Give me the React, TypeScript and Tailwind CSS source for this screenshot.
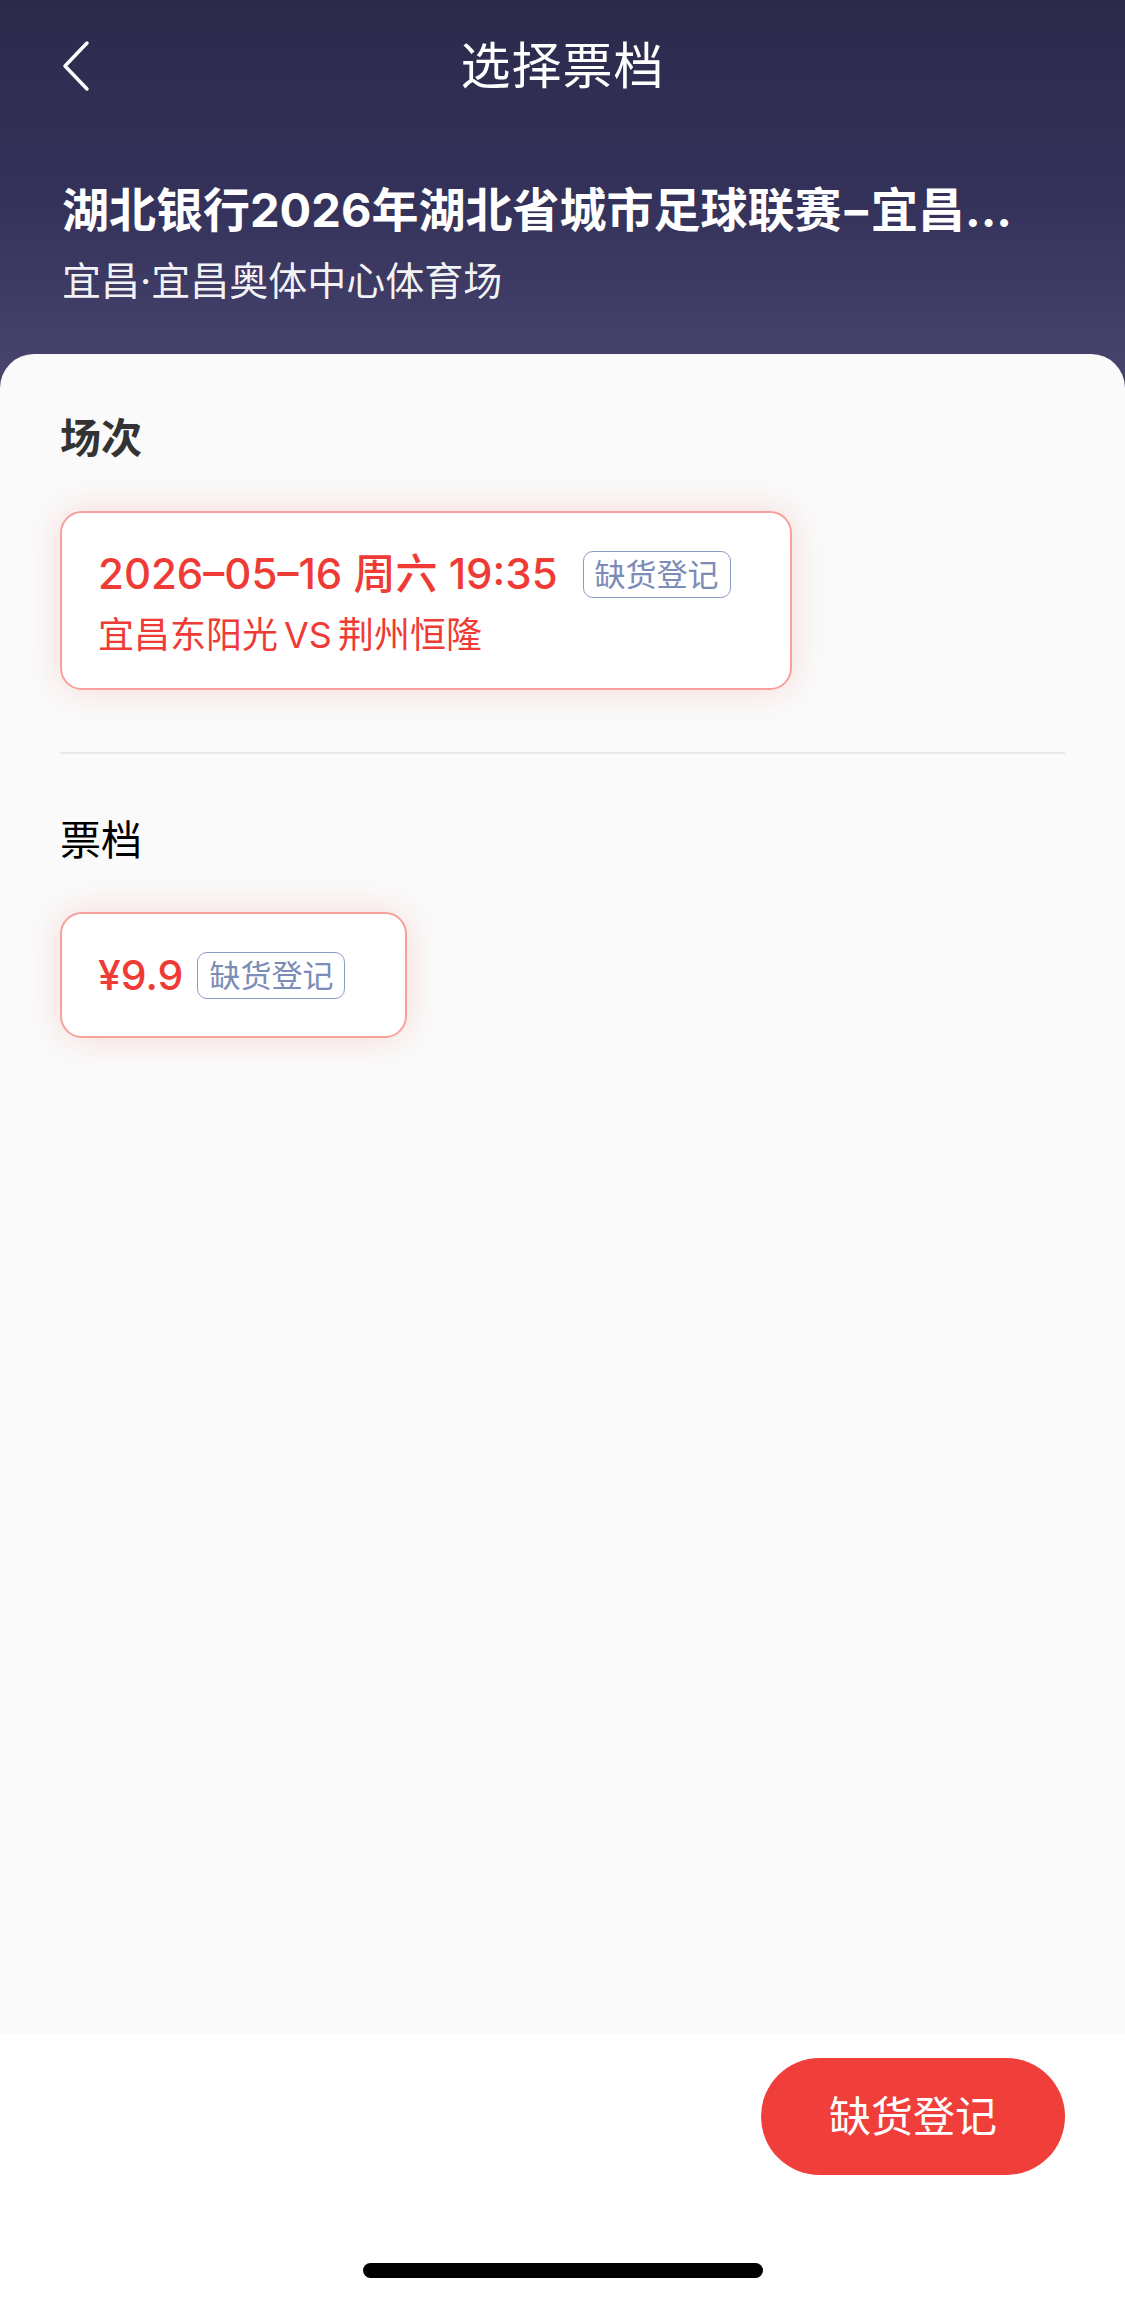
import React from "react";

const FONT = "font-['Inter','Noto_Sans_CJK_SC',sans-serif]";

function Badge() {
  return (
    <span className="inline-flex h-[47px] w-[148px] items-center justify-center rounded-[10px] border-[1.5px] border-[#8b9bc2] text-[31px] leading-none text-[#7b8cb6]">
      缺货登记
    </span>
  );
}

export default function App() {
  return (
    <div className={`${FONT} flex min-h-[2304px] w-[1125px] flex-col bg-[#fafafa]`}>
      {/* Header */}
      <div className="h-[400px] bg-gradient-to-b from-[#2c2a4b] via-[#34325a] to-[#4a4670] px-[62px] text-white">
        <div className="relative flex h-[132px] items-center justify-center">
          <svg
            className="absolute left-0 top-[40px]"
            width="28"
            height="52"
            viewBox="0 0 28 52"
            fill="none"
          >
            <path d="M25 3 L3 26 L25 49" stroke="white" strokeWidth="3.5" strokeLinecap="round" strokeLinejoin="round" />
          </svg>
          <span className="text-[50px] leading-none tracking-[1px]">选择票档</span>
        </div>
        <div className="mt-[45px] whitespace-nowrap text-[47px] font-bold leading-[66px]">
          湖北银行2026年湖北省城市足球联赛<span className="mx-[3px]">–</span>宜昌...
        </div>
        <div className="mt-[11px] text-[39px] leading-[54px] text-white/95">宜昌·宜昌奥体中心体育场</div>
      </div>

      {/* Panel */}
      <div className="-mt-[46px] flex flex-1 flex-col rounded-t-[34px] bg-[#fafafa] px-[60px] pt-[55px]">
        <div className="text-[41px] font-bold leading-[58px] text-[#333333]">场次</div>
        <div className="mt-[44px] flex w-[732px] flex-col rounded-[22px] border-2 border-[#f8a19b] bg-white pb-[28px] pl-[36px] pr-[40px] pt-[31px] shadow-[0_0_34px_rgba(240,70,60,0.18)]">
          <div className="flex h-[60px] items-center">
            <span className="text-[42px] font-medium leading-none text-[#ef3b36]">2026–05–16 周六 19:35</span>
            <span className="ml-[25px]">
              <Badge />
            </span>
          </div>
          <div className="mt-[6px] text-[36px] leading-[50px] text-[#ef3b36]">
            宜昌东阳光<span className="mx-[6px]">VS</span>荆州恒隆
          </div>
        </div>

        <div className="mt-[62px] h-[2px] bg-[#e8e8e8]" />

        <div className="mt-[57px] text-[41px] leading-[58px] text-black">票档</div>
        <div className="mt-[43px] flex h-[126px] w-[347px] items-center rounded-[22px] border-2 border-[#f8a19b] bg-white pl-[36px] shadow-[0_0_34px_rgba(240,70,60,0.18)]">
          <span className="text-[41px] font-medium leading-none text-[#ef3b36]">¥9.9</span>
          <span className="ml-[14px]">
            <Badge />
          </span>
        </div>
        <div className="flex-1" />
      </div>

      {/* Bottom bar */}
      <div className="relative h-[271px] bg-white">
        <div className="flex justify-end px-[60px] pt-[25px]">
          <button className="flex h-[117px] w-[304px] items-center justify-center rounded-full bg-[#f03e3a] text-[42px] leading-none text-white">
            缺货登记
          </button>
        </div>
        <div className="absolute bottom-[26px] left-1/2 h-[15px] w-[400px] -translate-x-1/2 rounded-full bg-black" />
      </div>
    </div>
  );
}
